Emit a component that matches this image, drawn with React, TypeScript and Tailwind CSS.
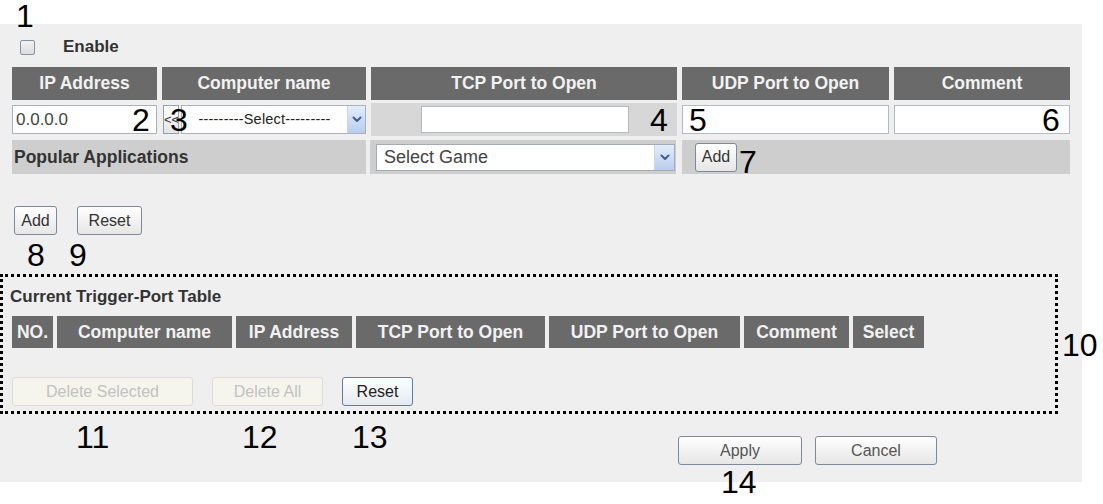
import React from 'react';

const font = { fontFamily: '"Liberation Sans", Arial, sans-serif' };

function Chevron() {
  return (
    <svg width="10" height="7" viewBox="0 0 10 7" fill="none">
      <path d="M1.5 1.5 L5 5 L8.5 1.5" stroke="#3f5f8f" strokeWidth="2" strokeLinecap="round" strokeLinejoin="round" />
    </svg>
  );
}

function ArrowBox({ w }: { w: string }) {
  return (
    <div className={`${w} h-full flex items-center justify-center bg-gradient-to-b from-[#e3edfb] to-[#b8cdee] border-l border-[#c9d6ea]`}>
      <Chevron />
    </div>
  );
}

function Btn({ label, className }: { label: string; className: string }) {
  return (
    <button
      type="button"
      className={`h-[29px] rounded-[3px] border border-[#7d8b98] bg-gradient-to-b from-white to-[#e6e6e6] text-[16px] text-[#333] flex items-center justify-center ${className}`}
    >
      {label}
    </button>
  );
}

function DisabledBtn({ label, className }: { label: string; className: string }) {
  return (
    <button
      type="button"
      className={`h-[29px] rounded-[3px] border border-[#dcdcd2] bg-[#f5f5ee] text-[16px] text-[#c2c2c2] flex items-center justify-center ${className}`}
    >
      {label}
    </button>
  );
}

function Th({ children }: { children: React.ReactNode }) {
  return (
    <div className="bg-[#6a6a6a] text-[#f2f2f2] font-bold text-[17.5px] flex items-center justify-center whitespace-nowrap">
      {children}
    </div>
  );
}

function Num({ n, className }: { n: string; className: string }) {
  return (
    <span className={`absolute text-[32px] leading-none text-black ${className}`}>{n}</span>
  );
}

export default function App() {
  return (
    <div className="relative w-[1103px] h-[504px] bg-white overflow-hidden" style={font}>
      <div className="mt-[24px] w-[1082px] h-[458px] bg-[#efefef] flex flex-col">
        {/* Enable */}
        <div className="mt-[14px] ml-[20px] h-[18px] flex items-center gap-[28px]">
          <div className="w-[15px] h-[15px] border border-[#8493a3] rounded-[2px] bg-gradient-to-b from-[#f2f2f2] to-[#dcdcdc]" />
          <span className="font-bold text-[17px] text-[#333]">Enable</span>
        </div>

        {/* table 1 */}
        <div className="mt-[11px] ml-[12px] w-[1058px] grid grid-cols-[145px_204px_306px_207px_176px] gap-x-[5px] gap-y-[3px] grid-rows-[33px_33px]">
          <Th>IP Address</Th>
          <Th>Computer name</Th>
          <Th>TCP Port to Open</Th>
          <Th>UDP Port to Open</Th>
          <Th>Comment</Th>

          <div className="py-[2px]">
            <input readOnly value="0.0.0.0" className="w-full h-full border border-[#a9b1ba] bg-white px-[3px] text-[17px] text-[#444] outline-none" />
          </div>
          <div className="flex gap-[2px] py-[2px] pl-[1px]">
            <button type="button" className="w-[16px] h-full border border-[#8fa0b3] bg-gradient-to-b from-white to-[#e4e4e4] text-[13px] text-[#333] overflow-hidden leading-none">&lt;&lt;</button>
            <div className="flex-1 h-full border border-[#a9b1ba] bg-white flex items-center">
              <span className="flex-1 text-center text-[14.5px] text-[#222] tracking-[0.2px] whitespace-nowrap">---------Select---------</span>
              <ArrowBox w="w-[18px]" />
            </div>
          </div>
          <div className="bg-[#d7d7d7] flex items-center pl-[50px] pr-[48px]">
            <input readOnly value="" className="w-full h-[27px] border border-[#b4bac2] bg-white outline-none" />
          </div>
          <div className="py-[2px]">
            <input readOnly value="" className="w-full h-full border border-[#b4bac2] bg-white outline-none" />
          </div>
          <div className="py-[2px]">
            <input readOnly value="" className="w-full h-full border border-[#b4bac2] bg-white outline-none" />
          </div>
        </div>

        {/* popular applications */}
        <div className="mt-[4px] ml-[12px] w-[1058px] h-[34px] flex">
          <div className="w-[354px] bg-[#cecece] flex items-center pl-[2px] font-bold text-[17.5px] text-[#333]">
            Popular Applications
          </div>
          <div className="ml-[4px] w-[306px] bg-[#cecece] flex items-center pl-[6px] pr-[1px]">
            <div className="w-full h-[27px] border border-[#a3abb4] bg-white flex items-center">
              <span className="flex-1 pl-[7px] text-[18px] text-[#444]">Select Game</span>
              <ArrowBox w="w-[20px]" />
            </div>
          </div>
          <div className="ml-[6px] flex-1 bg-[#cecece] flex items-center pl-[13px]">
            <Btn label="Add" className="w-[42px] h-[27px]" />
          </div>
        </div>

        {/* add / reset */}
        <div className="mt-[32px] ml-[14px] flex gap-[20px]">
          <Btn label="Add" className="w-[43px]" />
          <Btn label="Reset" className="w-[65px]" />
        </div>

        {/* current table */}
        <div className="mt-[39px] w-[1058px] h-[140px] border-[3px] border-dotted border-black flex flex-col">
          <div className="mt-[10px] ml-[7px] h-[20px] leading-[20px] font-bold text-[17px] text-[#333]">
            Current Trigger-Port Table
          </div>
          <div className="mt-[9px] ml-[9px] h-[32px] grid grid-cols-[41px_175px_116px_189px_191px_105px_71px] gap-x-[4px]">
            <Th>NO.</Th>
            <Th>Computer name</Th>
            <Th>IP Address</Th>
            <Th>TCP Port to Open</Th>
            <Th>UDP Port to Open</Th>
            <Th>Comment</Th>
            <Th>Select</Th>
          </div>
          <div className="mt-[29px] ml-[9px] flex gap-[19px]">
            <DisabledBtn label="Delete Selected" className="w-[181px]" />
            <DisabledBtn label="Delete All" className="w-[111px]" />
            <button
              type="button"
              className="w-[71px] h-[29px] rounded-[3px] border border-[#5b7ea6] bg-gradient-to-b from-white to-[#e4eaf0] text-[16px] text-[#222] flex items-center justify-center"
            >
              Reset
            </button>
          </div>
        </div>

        {/* apply / cancel */}
        <div className="mt-[22px] pl-[678px] flex gap-[13px]">
          <Btn label="Apply" className="w-[124px] h-[28px] text-[#555]" />
          <Btn label="Cancel" className="w-[122px] h-[28px] text-[#555]" />
        </div>
      </div>

      <Num n="1" className="left-[16px] top-0" />
      <Num n="2" className="left-[132px] top-[104px]" />
      <Num n="3" className="left-[170px] top-[104px]" />
      <Num n="4" className="left-[650px] top-[104px]" />
      <Num n="5" className="left-[689px] top-[104px]" />
      <Num n="6" className="left-[1042px] top-[104px]" />
      <Num n="7" className="left-[739px] top-[146px]" />
      <Num n="8" className="left-[27px] top-[239px]" />
      <Num n="9" className="left-[69px] top-[239px]" />
      <Num n="10" className="left-[1062px] top-[329px]" />
      <Num n="11" className="left-[76px] top-[421px]" />
      <Num n="12" className="left-[242px] top-[421px]" />
      <Num n="13" className="left-[352px] top-[421px]" />
      <Num n="14" className="left-[721px] top-[466px]" />
    </div>
  );
}
